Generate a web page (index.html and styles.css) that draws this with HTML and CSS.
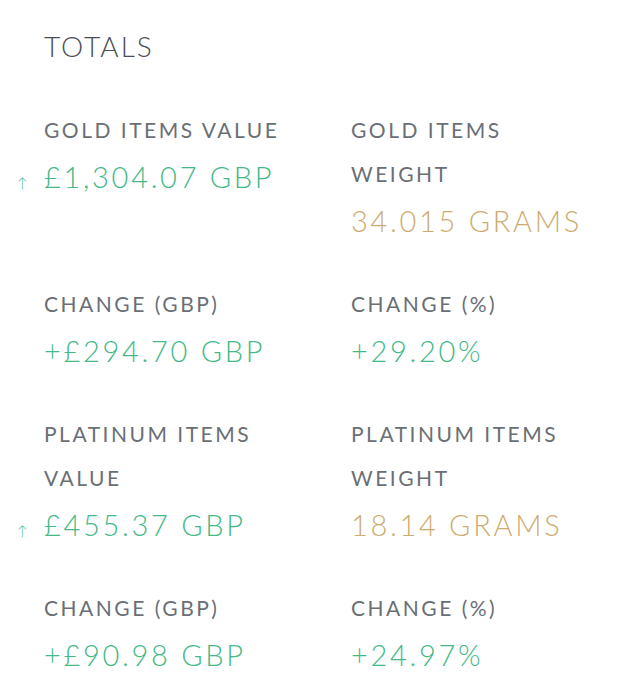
FILE: index.html
```html
<!DOCTYPE html>
<html lang="en">
<head>
<meta charset="utf-8">
<title>Totals</title>
<link rel="stylesheet" href="styles.css">
</head>
<body>
<section class="totals">
  <h1 class="title">TOTALS</h1>
  <div class="grid">
    <div class="cell">
      <div class="label">GOLD ITEMS VALUE</div>
      <div class="value green"><span class="arrow">↑</span>£1,304.07 GBP</div>
    </div>
    <div class="cell">
      <div class="label">GOLD ITEMS WEIGHT</div>
      <div class="value gold">34.015 GRAMS</div>
    </div>
    <div class="cell">
      <div class="label">CHANGE (GBP)</div>
      <div class="value green">+£294.70 GBP</div>
    </div>
    <div class="cell">
      <div class="label">CHANGE (%)</div>
      <div class="value green">+29.20%</div>
    </div>
    <div class="cell">
      <div class="label">PLATINUM ITEMS VALUE</div>
      <div class="value green"><span class="arrow">↑</span>£455.37 GBP</div>
    </div>
    <div class="cell">
      <div class="label">PLATINUM ITEMS WEIGHT</div>
      <div class="value gold">18.14 GRAMS</div>
    </div>
    <div class="cell">
      <div class="label">CHANGE (GBP)</div>
      <div class="value green">+£90.98 GBP</div>
    </div>
    <div class="cell">
      <div class="label">CHANGE (%)</div>
      <div class="value green">+24.97%</div>
    </div>
  </div>
</section>
</body>
</html>
```
FILE: styles.css
```css
html, body {
  margin: 0;
  padding: 0;
  background: #ffffff;
}

body {
  font-family: Lato, "Liberation Sans", sans-serif;
  font-weight: 300;
}

.totals {
  padding: 26px 0 0 44px;
}

.title {
  margin: 0;
  font-size: 28px;
  font-weight: 300;
  line-height: 40px;
  letter-spacing: 2px;
  color: #4a4e54;
}

.grid {
  margin-top: 42px;
  display: grid;
  grid-template-columns: 307px 307px;
  row-gap: 36px;
}

.cell {
  width: 245px;
}

.label {
  font-size: 21px;
  line-height: 44px;
  letter-spacing: 2.5px;
  color: #6a6f76;
  font-weight: 400;
}

.value {
  position: relative;
  font-size: 29px;
  line-height: 50px;
  letter-spacing: 2.7px;
  white-space: nowrap;
}

.green { color: #44b987; }
.gold { color: #cdac70; }

.arrow {
  position: absolute;
  left: -27px;
  top: 6px;
  font-size: 14px;
  letter-spacing: 0;
}
```
